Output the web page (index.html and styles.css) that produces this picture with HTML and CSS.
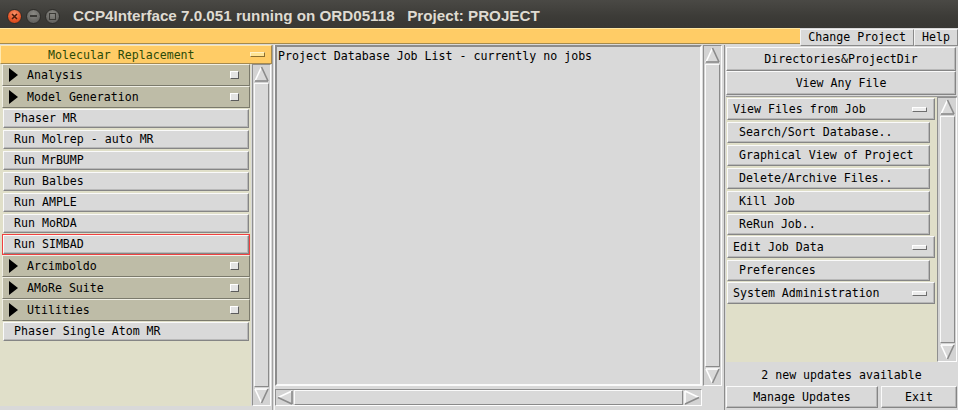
FILE: index.html
```html
<!DOCTYPE html>
<html>
<head>
<meta charset="utf-8">
<link rel="stylesheet" href="styles.css">
</head>
<body>
<svg class="defs" width="0" height="0">
  <symbol id="a-up" viewBox="0 0 15 16">
    <polygon points="7.5,1 1,15 14,15" fill="#d9d9d9"/>
    <line x1="7.5" y1="1" x2="1" y2="15" stroke="#fff" stroke-width="1.6"/>
    <line x1="7.5" y1="1" x2="14" y2="15" stroke="#8a8a8a" stroke-width="1.6"/>
    <line x1="1" y1="15" x2="14" y2="15" stroke="#8a8a8a" stroke-width="1.6"/>
  </symbol>
  <symbol id="a-down" viewBox="0 0 15 16">
    <polygon points="1,1 14,1 7.5,15" fill="#d9d9d9"/>
    <line x1="1" y1="1" x2="14" y2="1" stroke="#fff" stroke-width="1.6"/>
    <line x1="1" y1="1" x2="7.5" y2="15" stroke="#fff" stroke-width="1.6"/>
    <line x1="14" y1="1" x2="7.5" y2="15" stroke="#8a8a8a" stroke-width="1.6"/>
  </symbol>
  <symbol id="a-left" viewBox="0 0 16 15">
    <polygon points="1,7.5 15,1 15,14" fill="#d9d9d9"/>
    <line x1="1" y1="7.5" x2="15" y2="1" stroke="#fff" stroke-width="1.6"/>
    <line x1="1" y1="7.5" x2="15" y2="14" stroke="#8a8a8a" stroke-width="1.6"/>
    <line x1="15" y1="1" x2="15" y2="14" stroke="#8a8a8a" stroke-width="1.6"/>
  </symbol>
  <symbol id="a-right" viewBox="0 0 16 15">
    <polygon points="15,7.5 1,1 1,14" fill="#d9d9d9"/>
    <line x1="1" y1="1" x2="1" y2="14" stroke="#fff" stroke-width="1.6"/>
    <line x1="1" y1="1" x2="15" y2="7.5" stroke="#fff" stroke-width="1.6"/>
    <line x1="1" y1="14" x2="15" y2="7.5" stroke="#8a8a8a" stroke-width="1.6"/>
  </symbol>
</svg>

<div class="titlebar">
  <div class="wbtns">
    <span class="wb close"><svg width="7" height="7" viewBox="0 0 7 7"><path d="M1 1L6 6M6 1L1 6" stroke="#4a1a08" stroke-width="1.5"/></svg></span>
    <span class="wb other"><span class="minbar"></span></span>
    <span class="wb other"><span class="maxbox"></span></span>
  </div>
  <div class="title">CCP4Interface 7.0.051 running on ORD05118&nbsp;&nbsp; Project: PROJECT</div>
</div>

<div class="topbar">
  <div class="ybar"></div>
  <div class="tbtn">Change Project</div>
  <div class="tbtn">Help</div>
</div>

<div class="main">
  <div class="left">
    <div class="mrhead"><span class="mrtitle">Molecular Replacement</span><span class="ind yind"></span></div>
    <div class="lbody">
      <div class="list">
        <div class="sect"><span class="tri"></span><span class="stext">Analysis</span><span class="sq"></span></div>
        <div class="sect"><span class="tri"></span><span class="stext">Model Generation</span><span class="sq"></span></div>
        <div class="slot"><div class="btn lbtn">Phaser MR</div></div>
        <div class="slot"><div class="btn lbtn">Run Molrep - auto MR</div></div>
        <div class="slot"><div class="btn lbtn">Run MrBUMP</div></div>
        <div class="slot"><div class="btn lbtn">Run Balbes</div></div>
        <div class="slot"><div class="btn lbtn">Run AMPLE</div></div>
        <div class="slot"><div class="btn lbtn">Run MoRDA</div></div>
        <div class="slot focus"><div class="btn lbtn">Run SIMBAD</div></div>
        <div class="sect"><span class="tri"></span><span class="stext">Arcimboldo</span><span class="sq"></span></div>
        <div class="sect"><span class="tri"></span><span class="stext">AMoRe Suite</span><span class="sq"></span></div>
        <div class="sect"><span class="tri"></span><span class="stext">Utilities</span><span class="sq"></span></div>
        <div class="slot"><div class="btn lbtn">Phaser Single Atom MR</div></div>
      </div>
      <div class="vsb">
        <svg class="arr" width="15" height="16"><use href="#a-up"/></svg>
        <div class="slider"></div>
        <svg class="arr" width="15" height="16"><use href="#a-down"/></svg>
      </div>
    </div>
  </div>

  <div class="sep"></div>

  <div class="center">
    <div class="joblist">Project Database Job List - currently no jobs</div>
    <div class="vsb">
      <svg class="arr" width="15" height="16"><use href="#a-up"/></svg>
      <div class="slider"></div>
      <svg class="arr" width="15" height="16"><use href="#a-down"/></svg>
    </div>
    <div class="hsb">
      <svg class="arr" width="16" height="15"><use href="#a-left"/></svg>
      <div class="hslider"></div>
      <svg class="arr" width="16" height="15"><use href="#a-right"/></svg>
    </div>
    <div class="corner"></div>
  </div>

  <div class="right">
    <div class="btn rtop first">Directories&amp;ProjectDir</div>
    <div class="btn rtop">View Any File</div>
    <div class="rbox">
      <div class="rlist">
        <div class="mslot"><div class="btn mbtn"><span>View Files from Job</span><span class="ind"></span></div></div>
        <div class="rslot"><div class="btn rbtn">Search/Sort Database..</div></div>
        <div class="rslot"><div class="btn rbtn">Graphical View of Project</div></div>
        <div class="rslot"><div class="btn rbtn">Delete/Archive Files..</div></div>
        <div class="rslot"><div class="btn rbtn">Kill Job</div></div>
        <div class="rslot"><div class="btn rbtn">ReRun Job..</div></div>
        <div class="mslot"><div class="btn mbtn"><span>Edit Job Data</span><span class="ind"></span></div></div>
        <div class="rslot"><div class="btn rbtn">Preferences</div></div>
        <div class="mslot"><div class="btn mbtn"><span>System Administration</span><span class="ind"></span></div></div>
      </div>
      <div class="vsb">
        <svg class="arr" width="15" height="16"><use href="#a-up"/></svg>
        <div class="slider"></div>
        <svg class="arr" width="15" height="16"><use href="#a-down"/></svg>
      </div>
    </div>
    <div class="updates">2 new updates available</div>
    <div class="bottom">
      <div class="btn bbtn manage">Manage Updates</div>
      <div class="btn bbtn exit">Exit</div>
    </div>
  </div>
</div>
</body>
</html>
```
FILE: styles.css
```css
* { box-sizing: border-box; margin: 0; padding: 0; }
html, body { width: 958px; height: 410px; overflow: hidden; }
body {
  background: #d9d9d9;
  font-family: "DejaVu Sans Mono", "Liberation Mono", monospace;
  font-size: 11.6px;
  color: #000;
}
.defs { position: absolute; width: 0; height: 0; }

/* title bar */
.titlebar {
  height: 28px;
  background: linear-gradient(#4a4945, #3c3b37 60%, #393834);
  display: flex;
  align-items: center;
}
.wbtns { display: flex; gap: 4px; padding-left: 7px; margin-top: 4px; align-items: center; }
.wb {
  width: 15px; height: 15px; border-radius: 50%;
  display: flex; align-items: center; justify-content: center;
}
.close {
  background: radial-gradient(circle at 50% 30%, #f7936a, #e8582a 55%, #c8400f);
  border: 1px solid #2e2d2a;
}
.other {
  background: radial-gradient(circle at 50% 30%, #8a8984, #6b6a66 60%, #5a5955);
  border: 1px solid #2e2d2a;
}
.minbar { width: 7px; height: 2px; background: #3a3935; }
.maxbox { width: 7px; height: 7px; border: 1.5px solid #3a3935; }
.title {
  margin-left: 13px;
  margin-top: 2px;
  font-family: "Liberation Sans", Arial, sans-serif;
  font-weight: bold;
  font-size: 15.2px;
  color: #dfdbd2;
  white-space: pre;
}

/* top bar */
.topbar { height: 17px; display: flex; }
.ybar {
  flex: 1;
  background: #ffcc66;
  border-top: 1px solid #ffe6a0;
  border-bottom: 1px solid #a58a4c;
  height: 16px;
}
.tbtn {
  background: #d9d9d9;
  border: 1px solid;
  border-color: #f4f4f4 #8a8a8a #8a8a8a #f4f4f4;
  padding: 0 7px;
  line-height: 15px;
  height: 17px;
  margin-top: 1px;
}

/* main */
.main { display: flex; height: 365px; }

.btn {
  background: #d9d9d9;
  border: 1px solid;
  border-color: #fafafa #858585 #858585 #fafafa;
  box-shadow: inset -1px -1px 0 #b8b8b8;
  white-space: pre;
}

/* left */
.left { width: 272px; display: flex; flex-direction: column; }
.mrhead {
  height: 19px;
  background: #ffcc66;
  border: 1px solid;
  border-color: #ffe9b0 #a5894d #a5894d #ffe9b0;
  display: flex; align-items: center;
}
.mrtitle { padding-left: 47px; width: 249px; color: #2b4a08; }
.ind {
  width: 15px; height: 5px;
  background: #ececec;
  border: 1px solid;
  border-color: #fff #6e6e6e #6e6e6e #fff;
}
.yind { background: #ffe494; border-color: #fff2c8 #8a6f30 #8a6f30 #fff2c8; }

.lbody { display: flex; height: 342px; }
.list {
  width: 251px;
  background: #e0dfc9;
  padding-left: 2px;
  padding-right: 1px;
}
.sect {
  height: 22px;
  background: #bebca7;
  border: 1px solid;
  border-color: #f0efe5 #7b7a6c #7b7a6c #f0efe5;
  display: flex; align-items: center;
}
.tri {
  width: 0; height: 0;
  border-left: 9px solid #000;
  border-top: 7px solid transparent;
  border-bottom: 7px solid transparent;
  margin-left: 6px;
}
.stext { margin-left: 9px; flex: 1; }
.sq {
  width: 9px; height: 8px;
  background: #e4e4e4;
  border: 1px solid;
  border-color: #fff #5c5c5c #5c5c5c #fff;
  margin-right: 10px;
}
.slot { height: 21px; border: 1px solid transparent; }
.slot.focus { border-color: #f04040; }
.lbtn { height: 19px; line-height: 17px; padding-left: 10px; }

.vsb {
  width: 19px;
  display: flex; flex-direction: column; align-items: center;
  border: 1px solid;
  border-color: #8f8f8f #fdfdfd #fdfdfd #8f8f8f;
  background: #d3d3d3;
  padding: 1px 0;
}
.lbody .vsb { margin-left: 1px; }
.arr { flex: none; display: block; }
.slider {
  flex: 1; width: 15px;
  background: #d9d9d9;
  border: 1px solid;
  border-color: #fafafa #8a8a8a #8a8a8a #fafafa;
  margin: 1px 0;
}

.sep {
  width: 3px;
  border-left: 1px solid #a2a2a2;
  border-right: 1px solid #f6f6f6;
}

/* center */
.center {
  width: 449px;
  display: grid;
  grid-template-columns: 427px 19px;
  grid-template-rows: 341px 17px;
  column-gap: 1px;
  row-gap: 3px;
  align-content: start;
}
.joblist {
  background: #d9d9d9;
  border: 2px solid;
  border-color: #8c8c8c #fafafa #fafafa #8c8c8c;
  padding: 2px 1px;
  line-height: 14px;
  white-space: pre;
}
.center .vsb { height: 341px; }
.hsb {
  display: flex; align-items: center;
  border: 1px solid;
  border-color: #8f8f8f #fdfdfd #fdfdfd #8f8f8f;
  background: #d3d3d3;
  padding: 0 1px;
}
.hslider {
  flex: 1; height: 15px;
  background: #d9d9d9;
  border: 1px solid;
  border-color: #fafafa #8a8a8a #8a8a8a #fafafa;
  margin: 0 1px;
}

/* right */
.right {
  width: 234px;
  border-left: 1px solid #8c8c8c;
  padding: 0 1px 0 1px;
  display: flex; flex-direction: column;
}
.rtop { height: 24px; line-height: 22px; text-align: center; width: 230px; }
.rtop.first { margin-top: 2px; }
.rbox {
  margin-top: 1px;
  height: 266px;
  display: flex;
  border-top: 1px solid #9a9a9a;
}
.rlist { width: 211px; background: #e0dfc9; padding-left: 1px; }
.rbox .vsb { width: 20px; }
.mslot { height: 23px; padding-top: 1px; }
.mbtn {
  height: 22px; width: 208px;
  display: flex; align-items: center; justify-content: space-between;
  padding: 0 7px 0 5px;
}
.rslot { height: 23px; padding-top: 2px; }
.rbtn { height: 21px; width: 203px; line-height: 19px; padding-left: 11px; }
.updates { height: 24px; line-height: 26px; text-align: center; }
.bottom { display: flex; gap: 3px; height: 22px; }
.bbtn { height: 22px; line-height: 20px; text-align: center; }
.manage { width: 152px; }
.exit { width: 76px; }
```
